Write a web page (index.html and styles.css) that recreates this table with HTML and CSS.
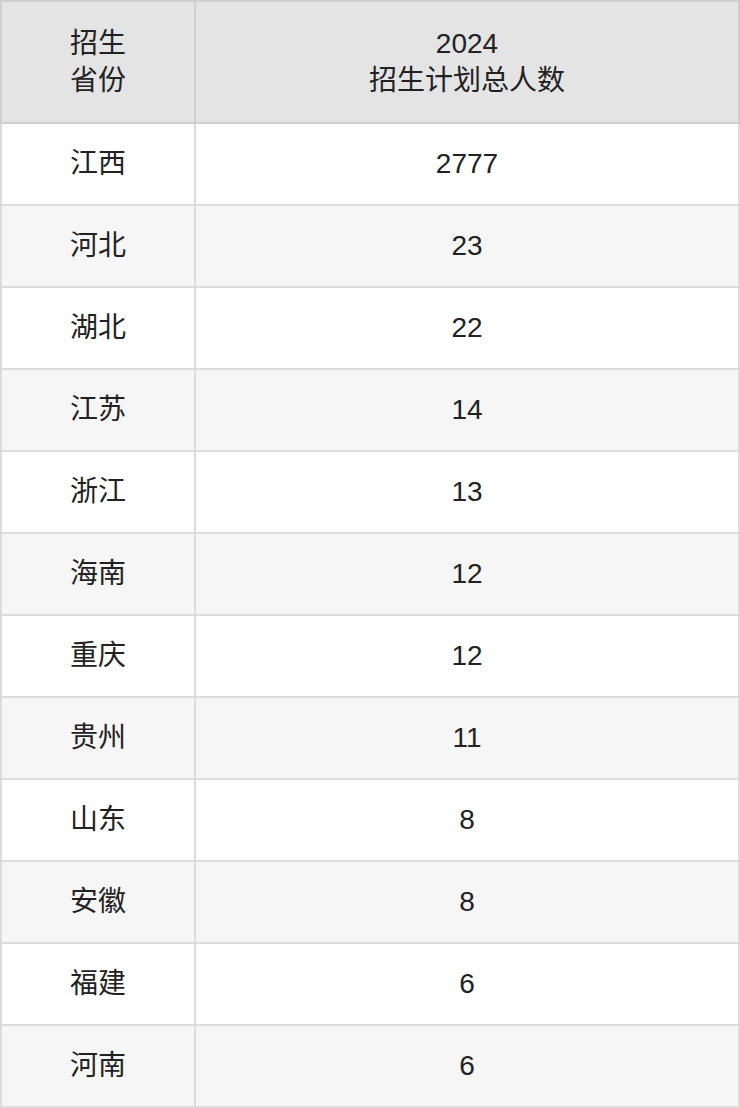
FILE: index.html
```html
<!DOCTYPE html>
<html lang="zh">
<head>
<meta charset="utf-8">
<link rel="stylesheet" href="styles.css">
</head>
<body>
<table class="plan">
  <thead>
    <tr><th class="c1">招生<br>省份</th><th class="c2">2024<br>招生计划总人数</th></tr>
  </thead>
  <tbody>
    <tr><td>江西</td><td>2777</td></tr>
    <tr><td>河北</td><td>23</td></tr>
    <tr><td>湖北</td><td>22</td></tr>
    <tr><td>江苏</td><td>14</td></tr>
    <tr><td>浙江</td><td>13</td></tr>
    <tr><td>海南</td><td>12</td></tr>
    <tr><td>重庆</td><td>12</td></tr>
    <tr><td>贵州</td><td>11</td></tr>
    <tr><td>山东</td><td>8</td></tr>
    <tr><td>安徽</td><td>8</td></tr>
    <tr><td>福建</td><td>6</td></tr>
    <tr><td>河南</td><td>6</td></tr>
  </tbody>
</table>
</body>
</html>
```
FILE: styles.css
```css
html, body { margin: 0; padding: 0; background: #fff; }
.plan {
  width: 740px;
  border-collapse: collapse;
  font-family: "Liberation Sans", "Noto Sans CJK SC", sans-serif;
  font-size: 28px;
  color: #222;
  table-layout: fixed;
}
.plan th, .plan td {
  border: 2px solid #dcdcdc;
  text-align: center;
  vertical-align: middle;
  padding: 0;
  font-weight: normal;
}
.plan th {
  background: #e4e4e4;
  height: 120px;
  line-height: 37px;
  border-color: #cfcfcf;
}
.plan .c1 { width: 192px; }
.plan td { height: 80px; line-height: 32px; }
.plan tbody tr:nth-child(even) td { background: #f6f6f6; }
```
